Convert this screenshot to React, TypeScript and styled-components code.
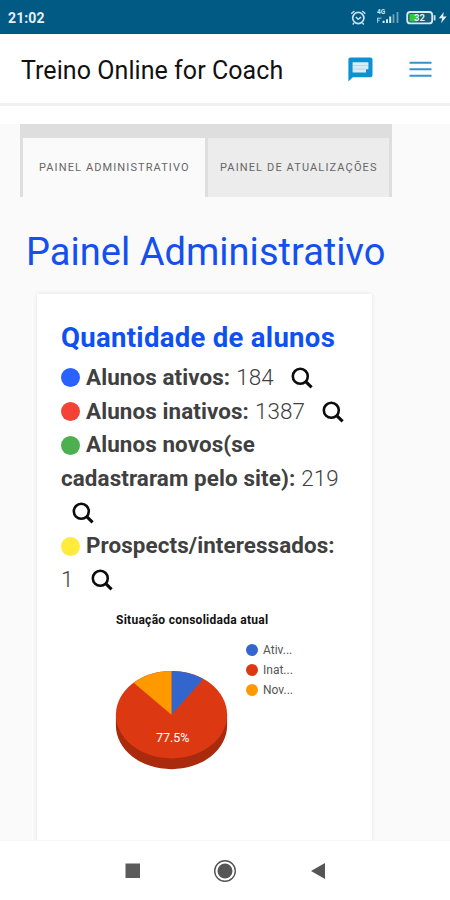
import React from 'react';
import styled, { createGlobalStyle } from 'styled-components';

const Global = createGlobalStyle`
  * { box-sizing: border-box; }
  body { margin: 0; background: #fff; font-family: Roboto, "Liberation Sans", sans-serif; }
  svg { display: block; flex: none; }
`;

const Screen = styled.div`
  width: 450px;
  height: 900px;
  display: flex;
  flex-direction: column;
  overflow: hidden;
  background: #fff;
`;

const StatusBar = styled.div`
  height: 34px;
  flex: none;
  display: flex;
  align-items: center;
  justify-content: space-between;
  padding: 1px 2px 0 8px;
  background: #005a84;
  color: #e4f1f7;
`;

const Clock = styled.span`
  font-size: 14px;
  font-weight: 700;
  letter-spacing: 0.1px;
`;

const Header = styled.header`
  height: 72px;
  flex: none;
  display: flex;
  align-items: center;
  padding: 2px 18px 0 21px;
  border-bottom: 3px solid #f0f0f0;
`;

const AppTitle = styled.div`
  flex: 1;
  font-size: 25px;
  line-height: 30px;
  color: #111;
  letter-spacing: 0.06px;
  padding-top: 3px;
  white-space: nowrap;
`;

const HeaderIcons = styled.div`
  display: flex;
  align-items: center;
  gap: 36px;
`;

const Content = styled.main`
  height: 717px;
  flex: none;
  margin-top: 18px;
  background: #fafafa;
  overflow: hidden;
  border-bottom: 1px solid #f7f7f7;
`;

const Tabs = styled.div`
  display: flex;
  width: 372px;
  height: 73px;
  margin-left: 20px;
  border: solid #dedede;
  border-width: 14px 3px 0 3px;
`;

const Tab = styled.div<{ $active?: boolean }>`
  width: ${p => (p.$active ? '182px' : '184px')};
  border-left: ${p => (p.$active ? '0' : '3px solid #dedede')};
  background: ${p => (p.$active ? '#fafafa' : '#ececec')};
  color: #666;
  font-size: 11px;
  line-height: 59px;
  letter-spacing: ${p => (p.$active ? '1.11px' : '1.13px')};
  padding-left: ${p => (p.$active ? '16px' : '12px')};
  white-space: nowrap;
`;

const PageTitle = styled.h1`
  margin: 32px 0 0 26px;
  font-size: 38px;
  line-height: 46px;
  font-weight: 400;
  letter-spacing: 0.03px;
  color: #1350ee;
  white-space: nowrap;
`;

const Card = styled.section`
  width: 335px;
  height: 560px;
  margin: 19px 0 0 37px;
  padding: 26px 0 0 24px;
  background: #fff;
  box-shadow: 0 0 4px rgba(0, 0, 0, 0.1);
`;

const CardTitle = styled.h2`
  margin: 0 0 4px;
  font-size: 27.5px;
  line-height: 36px;
  font-weight: 700;
  letter-spacing: 0.3px;
  color: #0f50f0;
  white-space: nowrap;
`;

const Line = styled.div`
  height: 33.7px;
  display: flex;
  align-items: center;
  color: #404040;
  font-size: 22.4px;
  white-space: nowrap;
`;

const Dot = styled.i<{ $color: string }>`
  width: 19px;
  height: 19px;
  margin: 2px 6px 0 0;
  border-radius: 50%;
  background: ${p => p.$color};
`;

const Label = styled.b`
  font-weight: 700;
  letter-spacing: 0.1px;
`;

const Value = styled.span`
  font-weight: 300;
  letter-spacing: 0.1px;
`;

const Count = styled(Value)`
  margin-left: 6px;
`;

const SearchButton = styled.span<{ $gap: number }>`
  margin: 3px 0 0 ${p => p.$gap}px;
`;

const ChartTitle = styled.div`
  margin: 16px 0 0 55px;
  font-size: 12px;
  line-height: 16px;
  font-weight: 700;
  letter-spacing: 0.27px;
  color: #111;
  white-space: nowrap;
`;

const ChartRow = styled.div`
  display: flex;
  align-items: flex-start;
  margin-left: 54px;
`;

const Legend = styled.div`
  display: flex;
  flex-direction: column;
  margin: 12px 0 0 18px;
`;

const LegendItem = styled.div<{ $color: string }>`
  display: flex;
  align-items: center;
  gap: 5px;
  height: 20px;
  font-size: 12px;
  color: #555;
  &::before {
    content: '';
    width: 12px;
    height: 12px;
    border-radius: 50%;
    background: ${p => p.$color};
  }
`;

const PieSvg = styled.svg`
  margin-top: 42px;
  text { font: 400 12.5px Roboto, sans-serif; }
`;

const NavBar = styled.nav`
  flex: 1;
  display: flex;
  align-items: center;
  justify-content: center;
  gap: 72.5px;
  background: #fff;
`;

const StatusIcons = () => (
  <svg width="98" height="24" viewBox="350 6 98 24">
    <g fill="none" stroke="#c9e2ee" strokeWidth="1.7">
      <circle cx="358.3" cy="18" r="5.6" />
      <path d="M351.2 13.8l3.2-2.8M362.2 11l3.2 2.8M355.8 17l2.3 2.3 3-2.2M354 23l-1.3 1.5M362.5 23l1.3 1.5" strokeWidth="1.4" />
    </g>
    <text x="377" y="13.7" fontSize="6.5" fontWeight="700" fill="#c9e2ee">4G</text>
    <path d="M377.2 18.2h4.2M377.6 18v4.8M377.5 20.2h2.2" stroke="#a9cfdf" fill="none" />
    <path d="M382.6 20.8h2v2.2h-2zM386 19.2h2V23h-2zM389.2 16.5h2V23h-2z" fill="#d6eaf2" />
    <path d="M392.6 14.2h1.8V23h-1.8zM396.6 12h1.8v11h-1.8z" fill="#6ba3bd" />
    <rect x="407.2" y="12" width="25" height="11.4" rx="3" fill="#12607b" stroke="#d6eaf2" strokeWidth="1.8" />
    <rect x="409.5" y="14" width="7.5" height="7.5" fill="#37c736" />
    <path d="M434.6 15.2v5.2" stroke="#c9e2ee" strokeWidth="1.8" />
    <text x="414" y="21.3" fontSize="9.5" fontWeight="700" fill="#e6f2e6">32</text>
    <path d="M443.8 12l-5 6.2h3.4l-1.2 5 5.6-6.7h-3.5z" fill="#e4f1f7" />
  </svg>
);

const ChatIcon = () => (
  <svg width="25" height="25" viewBox="0 0 25 25">
    <path d="M2.5.4h20a2 2 0 0 1 2 2v15.8a2 2 0 0 1-2 2H4.8L.4 24.4V2.4a2 2 0 0 1 2.1-2z" fill="#0e91d2" />
    <path d="M4.6 5.2h15.8v7H18v3.2H4.6z" fill="#d9edf4" />
    <path d="M5 8.6h15M5 12.1h13" stroke="#b0d8e8" strokeWidth=".9" />
  </svg>
);

const MenuIcon = () => (
  <svg width="23" height="17" viewBox="0 0 23 17">
    <path d="M.5 1.8h22M.5 8.3h22M.5 14.8h22" stroke="#3096ca" strokeWidth="2.1" />
  </svg>
);

const Search = ({ gap }: { gap: number }) => (
  <SearchButton $gap={gap}>
    <svg width="22" height="22" viewBox="0 0 22 22" fill="none" stroke="#0c0c0c">
      <circle cx="9.3" cy="9.3" r="7.5" strokeWidth="2.6" />
      <path d="M14 13.8l6.6 6.6" strokeWidth="3.1" />
    </svg>
  </SearchButton>
);

const Pie = () => (
  <PieSvg width="113" height="102" viewBox="0 0 113 102">
    <path d="M.9 44v11.5a55.6 43.7 0 0 0 111.2 0V44z" fill="#a92a0d" />
    <ellipse cx="56.5" cy="44.7" rx="55.6" ry="43.7" fill="#dc3912" />
    <path d="M56.5 44.7V1A55.6 43.7 0 0 1 88.3 8.9z" fill="#3366cc" />
    <path d="M56.5 44.7V1A55.6 43.7 0 0 0 18.7 12.7z" fill="#ff9900" />
    <text x="57.7" y="71.5" textAnchor="middle" fill="#fff">77.5%</text>
  </PieSvg>
);

export default function App() {
  return (
    <Screen>
      <Global />
      <StatusBar><Clock>21:02</Clock><StatusIcons /></StatusBar>
      <Header>
        <AppTitle>Treino Online for Coach</AppTitle>
        <HeaderIcons><ChatIcon /><MenuIcon /></HeaderIcons>
      </Header>
      <Content>
        <Tabs>
          <Tab $active>PAINEL ADMINISTRATIVO</Tab>
          <Tab>PAINEL DE ATUALIZAÇÕES</Tab>
        </Tabs>
        <PageTitle>Painel Administrativo</PageTitle>
        <Card>
          <CardTitle>Quantidade de alunos</CardTitle>
          <Line><Dot $color="#2962ff" /><Label>Alunos ativos:</Label><Count>184</Count><Search gap={17} /></Line>
          <Line><Dot $color="#f44336" /><Label>Alunos inativos:</Label><Count>1387</Count><Search gap={17} /></Line>
          <Line><Dot $color="#4caf50" /><Label>Alunos novos(se</Label></Line>
          <Line><Label>cadastraram pelo site):</Label><Count>219</Count></Line>
          <Line><Search gap={11} /></Line>
          <Line><Dot $color="#ffeb3b" /><Label>Prospects/interessados:</Label></Line>
          <Line><Value>1</Value><Search gap={17} /></Line>
          <ChartTitle>Situação consolidada atual</ChartTitle>
          <ChartRow>
            <Pie />
            <Legend>
              <LegendItem $color="#3366cc">Ativ...</LegendItem>
              <LegendItem $color="#dc3912">Inat...</LegendItem>
              <LegendItem $color="#ff9900">Nov...</LegendItem>
            </Legend>
          </ChartRow>
        </Card>
      </Content>
      <NavBar>
        <svg width="16" height="16"><rect x=".5" y=".5" width="14.5" height="14.5" fill="#5b5b5b" /></svg>
        <svg width="24" height="24"><circle cx="12" cy="12" r="10.3" fill="none" stroke="#555" strokeWidth="1.4" /><circle cx="12" cy="12" r="7.5" fill="#555" /></svg>
        <svg width="16" height="18"><path d="M15 1v16L1 9z" fill="#555" /></svg>
      </NavBar>
    </Screen>
  );
}
